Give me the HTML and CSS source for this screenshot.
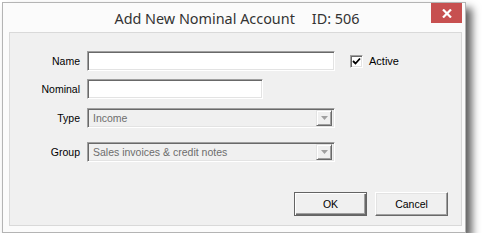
FILE: index.html
```html
<!DOCTYPE html>
<html>
<head>
<meta charset="utf-8">
<link rel="stylesheet" href="styles.css">
</head>
<body>
<div class="window">
  <div class="titlebar">
    <span class="title">Add New Nominal Account</span>
    <span class="title">ID: 506</span>
    <div class="close">
      <svg width="10" height="9" viewBox="0 0 10 9"><path d="M1 0.5 L9 8.5 M9 0.5 L1 8.5" stroke="#fff" stroke-width="2.2" fill="none"/></svg>
    </div>
  </div>
  <div class="panel">
    <div class="form">
      <div class="row r-name">
        <span class="lbl">Name</span>
        <div class="field w-long"></div>
        <div class="check">
          <span class="box"><svg width="9" height="9" viewBox="0 0 9 9"><path d="M1 4 L3.5 6.5 L8 1.5" stroke="#000" stroke-width="1.8" fill="none"/></svg></span>
          <span>Active</span>
        </div>
      </div>
      <div class="row r-nominal">
        <span class="lbl">Nominal</span>
        <div class="field w-short"></div>
      </div>
      <div class="row r-type">
        <span class="lbl">Type</span>
        <div class="field combo w-long"><span class="val">Income</span><span class="drop"><svg width="7" height="4" viewBox="0 0 7 4"><path d="M0 0 H7 L3.5 4 Z" fill="#a0a0a0"/></svg></span></div>
      </div>
      <div class="row r-group">
        <span class="lbl">Group</span>
        <div class="field combo w-long"><span class="val">Sales invoices &amp; credit notes</span><span class="drop"><svg width="7" height="4" viewBox="0 0 7 4"><path d="M0 0 H7 L3.5 4 Z" fill="#a0a0a0"/></svg></span></div>
      </div>
    </div>
    <div class="buttons">
      <div class="btn default"><span>OK</span></div>
      <div class="btn"><span>Cancel</span></div>
    </div>
  </div>
</div>
</body>
</html>
```

FILE: styles.css
```css
html, body {
  margin: 0;
  padding: 0;
  background: #ffffff;
}
body {
  font-family: "Liberation Sans", Arial, sans-serif;
  font-size: 10.5px;
  color: #000;
}
.window {
  box-sizing: border-box;
  width: 464px;
  height: 231px;
  margin: 2px 0 0 2px;
  border: 1px solid #b4b4b4;
  background: #fbfbfb;
  box-shadow: 6px 6px 8px rgba(0,0,0,0.62);
  display: flex;
  flex-direction: column;
  position: relative;
}
.titlebar {
  height: 29px;
  flex: none;
  display: flex;
  justify-content: center;
  align-items: center;
  gap: 17px;
  padding-left: 6px;
  box-sizing: border-box;
}
.title {
  font-family: "Noto Sans", "Open Sans", sans-serif;
  font-size: 14.4px;
  color: #333;
  line-height: 20px;
  margin-top: 2px;
}
.close {
  position: absolute;
  top: 0;
  right: 3px;
  width: 31px;
  height: 20px;
  background: #c75050;
  display: flex;
  align-items: center;
  justify-content: center;
}
.panel {
  box-sizing: border-box;
  height: 194px;
  margin: 0 3px 0 6px;
  border: 1px solid #d9d9d9;
  background: #f0f0f0;
  display: flex;
  flex-direction: column;
  justify-content: space-between;
}
.form {
  padding-top: 18px;
  display: flex;
  flex-direction: column;
}
.row {
  display: flex;
  align-items: center;
  height: 20px;
}
.r-nominal { margin-top: 8px; }
.r-type { margin-top: 9px; }
.r-group { margin-top: 14px; }
.lbl {
  width: 70px;
  text-align: right;
  margin-right: 7px;
  flex: none;
}
.field {
  box-sizing: border-box;
  height: 20px;
  background: #fff;
  border-top: 1px solid #a0a0a0;
  border-left: 1px solid #a0a0a0;
  border-right: 1px solid #fff;
  border-bottom: 1px solid #fff;
  box-shadow: inset 1px 1px 0 #696969, inset -1px -1px 0 #e3e3e3;
  flex: none;
}
.w-long { width: 248px; }
.w-short { width: 176px; }
.combo {
  background: #f0f0f0;
  display: flex;
  align-items: center;
  justify-content: space-between;
  padding: 2px 2px 2px 5px;
  color: #6d6d6d;
}
.drop {
  box-sizing: border-box;
  width: 16px;
  height: 16px;
  background: #f0f0f0;
  border-top: 1px solid #e3e3e3;
  border-left: 1px solid #e3e3e3;
  border-right: 1px solid #696969;
  border-bottom: 1px solid #696969;
  box-shadow: inset 1px 1px 0 #fff, inset -1px -1px 0 #a0a0a0;
  display: flex;
  align-items: center;
  justify-content: center;
}
.check {
  display: flex;
  align-items: center;
  margin-left: 15px;
  gap: 6px;
  font-size: 11px;
}
.box {
  box-sizing: border-box;
  width: 13px;
  height: 13px;
  background: #fff;
  border-top: 1px solid #a0a0a0;
  border-left: 1px solid #a0a0a0;
  border-right: 1px solid #fff;
  border-bottom: 1px solid #fff;
  box-shadow: inset 1px 1px 0 #696969, inset -1px -1px 0 #e3e3e3;
  display: flex;
  align-items: center;
  justify-content: center;
}
.buttons {
  display: flex;
  justify-content: flex-end;
  gap: 8px;
  padding: 0 13px 9px 0;
}
.btn {
  box-sizing: border-box;
  width: 73px;
  height: 24px;
  background: #f0f0f0;
  border-top: 1px solid #fff;
  border-left: 1px solid #fff;
  border-right: 1px solid #696969;
  border-bottom: 1px solid #696969;
  box-shadow: inset -1px -1px 0 #a0a0a0, inset 1px 1px 0 #e3e3e3;
  display: flex;
  align-items: center;
  justify-content: center;
}
.btn.default {
  border: 1px solid #646464;
  box-shadow: inset 1px 1px 0 #fff, inset -1px -1px 0 #696969, inset -2px -2px 0 #a0a0a0;
}
```
